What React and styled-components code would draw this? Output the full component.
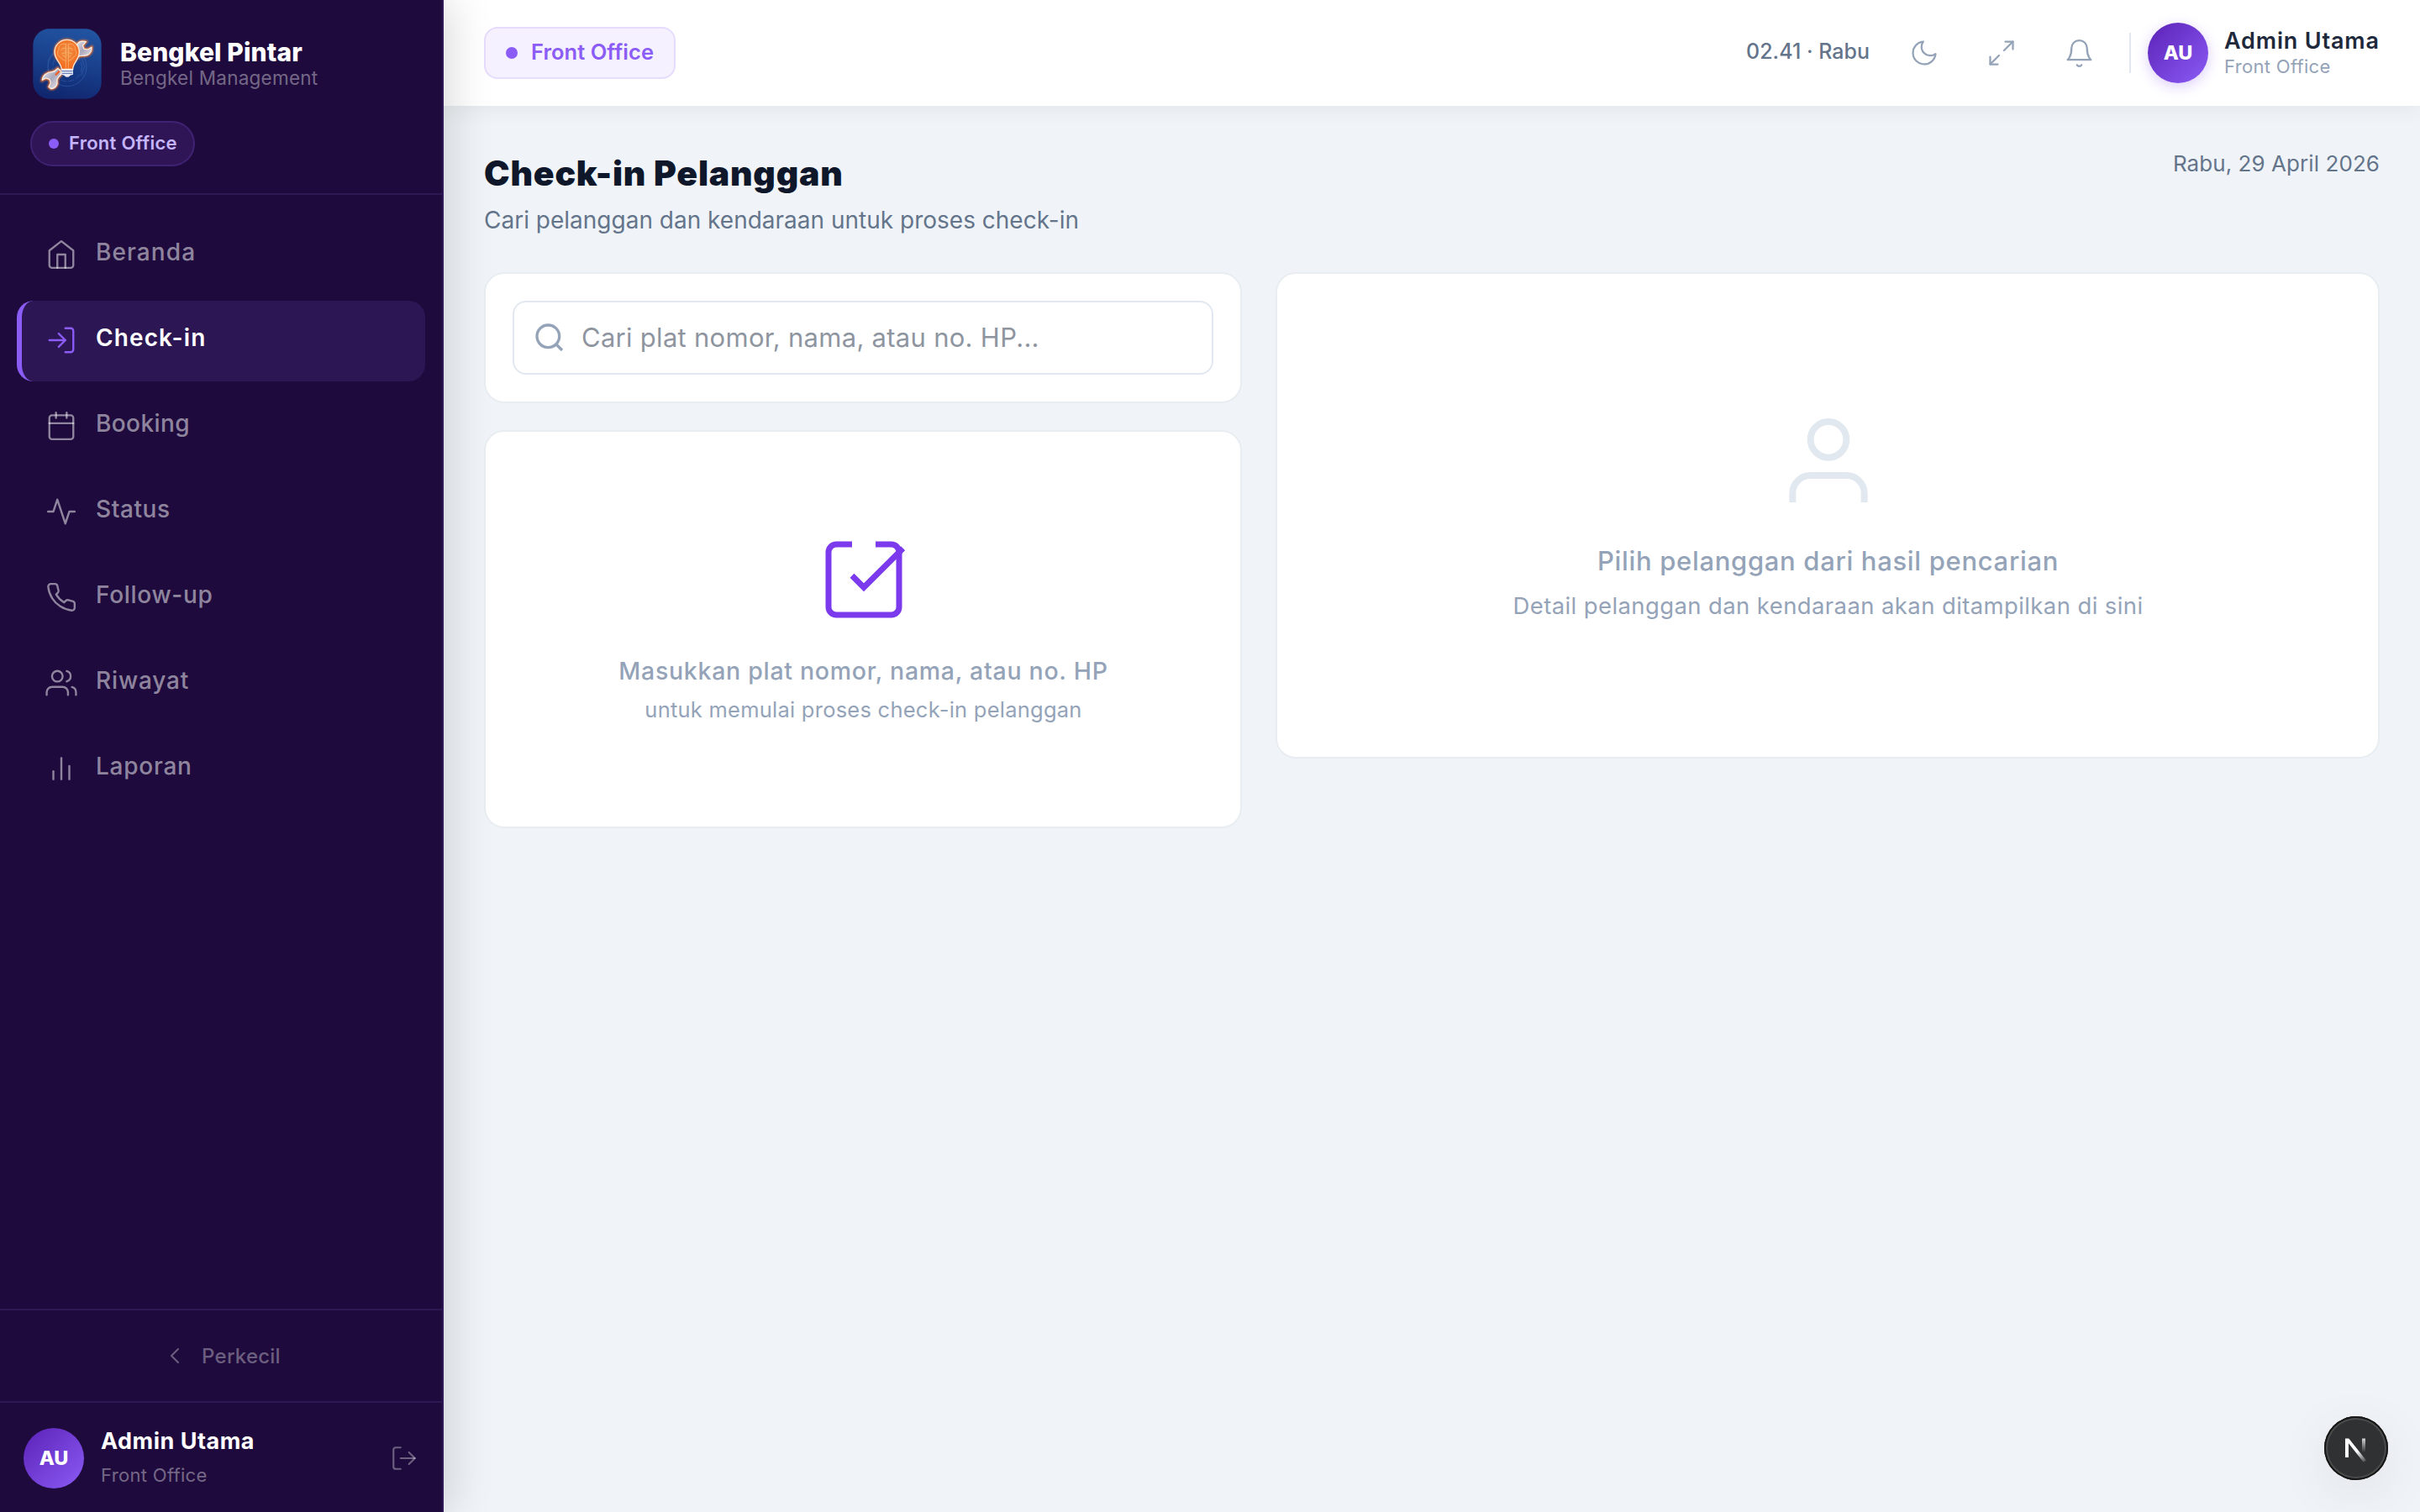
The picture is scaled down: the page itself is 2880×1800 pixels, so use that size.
import React from "react"
import styled, { createGlobalStyle } from "styled-components"

const navItems = [
  { label: "Beranda", icon: "home", tracking: 1.1 },
  { label: "Check-in", icon: "login", tracking: 1.1, active: true },
  { label: "Booking", icon: "calendar", tracking: 0.4 },
  { label: "Status", icon: "activity", tracking: 0.6 },
  { label: "Follow-up", icon: "phone", tracking: 0.7 },
  { label: "Riwayat", icon: "users", tracking: 0.85 },
  { label: "Laporan", icon: "chart", tracking: 0.75 },
]

const icons = {
  home: (
    <>
      <path d="M3 9l9-7 9 7v11a2 2 0 0 1-2 2H5a2 2 0 0 1-2-2z" />
      <polyline points="9 22 9 12 15 12 15 22" />
    </>
  ),
  login: (
    <>
      <path d="M15 3h4a2 2 0 0 1 2 2v14a2 2 0 0 1-2 2h-4" />
      <polyline points="10 17 15 12 10 7" />
      <line x1="15" y1="12" x2="3" y2="12" />
    </>
  ),
  calendar: (
    <>
      <rect x="3" y="4" width="18" height="18" rx="2" />
      <line x1="16" y1="2" x2="16" y2="6" />
      <line x1="8" y1="2" x2="8" y2="6" />
      <line x1="3" y1="10" x2="21" y2="10" />
    </>
  ),
  activity: <polyline points="22 12 18 12 15 21 9 3 6 12 2 12" />,
  phone: (
    <path d="M22 16.92v3a2 2 0 0 1-2.18 2 19.79 19.79 0 0 1-8.63-3.07 19.5 19.5 0 0 1-6-6 19.79 19.79 0 0 1-3.07-8.67A2 2 0 0 1 4.11 2h3a2 2 0 0 1 2 1.72 12.84 12.84 0 0 0 .7 2.81 2 2 0 0 1-.45 2.11L8.09 9.91a16 16 0 0 0 6 6l1.27-1.27a2 2 0 0 1 2.11-.45 12.84 12.84 0 0 0 2.81.7A2 2 0 0 1 22 16.92z" />
  ),
  users: (
    <>
      <path d="M17 21v-2a4 4 0 0 0-4-4H5a4 4 0 0 0-4 4v2" />
      <circle cx="9" cy="7" r="4" />
      <path d="M23 21v-2a4 4 0 0 0-3-3.87" />
      <path d="M16 3.13a4 4 0 0 1 0 7.75" />
    </>
  ),
  chart: (
    <>
      <line x1="18" y1="20" x2="18" y2="10" />
      <line x1="12" y1="20" x2="12" y2="4" />
      <line x1="6" y1="20" x2="6" y2="14" />
    </>
  ),
  chevron: <polyline points="15 18 9 12 15 6" />,
  logout: (
    <>
      <path d="M9 21H5a2 2 0 0 1-2-2V5a2 2 0 0 1 2-2h4" />
      <polyline points="16 17 21 12 16 7" />
      <line x1="21" y1="12" x2="9" y2="12" />
    </>
  ),
  moon: <path d="M21 12.79A9 9 0 1 1 11.21 3 7 7 0 0 0 21 12.79z" />,
  expand: (
    <>
      <polyline points="15 3 21 3 21 9" />
      <polyline points="9 21 3 21 3 15" />
      <line x1="21" y1="3" x2="14" y2="10" />
      <line x1="3" y1="21" x2="10" y2="14" />
    </>
  ),
  bell: (
    <>
      <path d="M18 8A6 6 0 0 0 6 8c0 7-3 9-3 9h18s-3-2-3-9" />
      <path d="M13.73 21a2 2 0 0 1-3.46 0" />
    </>
  ),
  search: (
    <>
      <circle cx="11" cy="11" r="8" />
      <line x1="21" y1="21" x2="16.65" y2="16.65" />
    </>
  ),
  checkin: (
    <>
      <path d="M9 3H5a2 2 0 0 0-2 2v14a2 2 0 0 0 2 2h14a2 2 0 0 0 2-2V5a2 2 0 0 0-2-2h-4" />
      <polyline points="9 11 12 14 22 4" />
    </>
  ),
  person: (
    <>
      <path d="M20 21v-2a4 4 0 0 0-4-4H8a4 4 0 0 0-4 4v2" />
      <circle cx="12" cy="7" r="4" />
    </>
  ),
}

const Icon = ({ name, size, weight = 1.5, cap = "round" }) => (
  <IconSvg
    width={size}
    height={size}
    viewBox="0 0 24 24"
    strokeWidth={weight}
    strokeLinecap={cap}
    strokeLinejoin={cap === "round" ? "round" : "miter"}
  >
    {icons[name]}
  </IconSvg>
)

const wrenchTop =
  "M200 112 C212 108 214 96 222 91 C230 86 240 87 247 89 L235 103 L240 115 L254 117 L267 109 C268 122 261 133 250 137 C238 141 228 136 220 142 L206 154 Z"
const wrenchBottom =
  "M146 184 C140 190 136 197 126 197 C110 197 92 208 91 226 L104 219 L117 223 L121 236 L114 250 L122 257 C138 256 147 243 144 228 C143 219 150 214 157 207 L156 192 Z"

const Logo = () => (
  <LogoSvg viewBox="57 42 246 252">
    <defs>
      <linearGradient id="logoBg" x1="0.6" y1="0" x2="0.4" y2="1">
        <stop offset="0" stopColor="#2153a0" />
        <stop offset="0.5" stopColor="#193f8b" />
        <stop offset="1" stopColor="#10276f" />
      </linearGradient>
      <radialGradient id="bulb" cx="0.5" cy="0.4" r="0.6">
        <stop offset="0" stopColor="#ee8f45" />
        <stop offset="1" stopColor="#f4691c" />
      </radialGradient>
      <linearGradient id="steel" x1="0" y1="0" x2="1" y2="1">
        <stop offset="0" stopColor="#f1eef2" />
        <stop offset="0.5" stopColor="#a9a8bd" />
        <stop offset="1" stopColor="#f7f0ee" />
      </linearGradient>
      <filter id="glow" x="-30%" y="-30%" width="160%" height="160%">
        <feGaussianBlur stdDeviation="3.5" />
      </filter>
    </defs>
    <rect x="58" y="43" width="244" height="250" rx="58" fill="url(#logoBg)" />
    <g fill="none" stroke="#4b7fd0" strokeWidth="3" opacity="0.35">
      <circle cx="180" cy="179" r="69" />
      <circle cx="180" cy="179" r="52" strokeDasharray="20 8" />
      <path d="M128 130 L112 158 V196 M232 150 L242 176 L230 210" />
    </g>
    <g fill="none" stroke="#ff7a2c" strokeWidth="10" filter="url(#glow)">
      <path d={wrenchTop} />
      <path d={wrenchBottom} />
      <circle cx="179" cy="125" r="44" strokeWidth="6" />
    </g>
    <g fill="url(#steel)" stroke="#fff3ea" strokeWidth="3.5" strokeLinejoin="round">
      <path d={wrenchTop} />
      <path d={wrenchBottom} />
    </g>
    <path d="M138 208 L152 194" stroke="#e9632a" strokeWidth="7" />
    <path
      d="M160 187 C158 165 135 152 135 126 A44 44 0 0 1 223 126 C223 152 200 165 200 187 Z"
      fill="url(#bulb)"
      stroke="#ffe9d6"
      strokeWidth="4"
    />
    <g fill="none" stroke="#ffd08f" strokeWidth="2.2" opacity="0.75">
      <path d="M175 96 V185 M184 96 V185" />
      <path d="M175 98 C160 92 146 106 150 118 C141 128 147 142 157 145 C160 154 169 154 175 158" />
      <path d="M184 98 C198 92 212 106 208 118 C217 128 211 142 201 145 C198 154 190 154 184 158" />
      <path d="M175 112 H163 L158 120 M175 128 L160 132 M175 144 L164 138" />
      <path d="M184 112 H195 L200 120 M184 128 L198 132 M184 144 L194 138" />
    </g>
    <path d="M159 188 H201 V206 L191 209 Q180 222 169 209 L159 206 Z" fill="#e9eaf4" />
    <path d="M160 194 H200 M161 202 H199" stroke="#35569c" strokeWidth="2.5" />
  </LogoSvg>
)

const App = () => {
  return (
    <>
      <GlobalStyle />
      <Page>
        <Sidebar>
          <SidebarHead>
            <Brand>
              <Logo />
              <BrandText>
                <BrandName>Bengkel Pintar</BrandName>
                <BrandSub>Bengkel Management</BrandSub>
              </BrandText>
            </Brand>
            <RoleBadge>
              <Dot $size={12} />
              <span>Front Office</span>
            </RoleBadge>
          </SidebarHead>
          <Nav>
            {navItems.map(({ label, icon, tracking, active }) => (
              <NavItem key={label} $active={active}>
                <Icon name={icon} size={38} />
                <NavLabel $tracking={tracking}>{label}</NavLabel>
              </NavItem>
            ))}
          </Nav>
          <Collapse>
            <Icon name="chevron" size={32} />
            <span>Perkecil</span>
          </Collapse>
          <SidebarUser>
            <Avatar>AU</Avatar>
            <SidebarUserText>
              <SidebarUserName>Admin Utama</SidebarUserName>
              <SidebarUserRole>Front Office</SidebarUserRole>
            </SidebarUserText>
            <LogoutButton>
              <Icon name="logout" size={34} />
            </LogoutButton>
          </SidebarUser>
        </Sidebar>
        <Main>
          <Topbar>
            <OfficeBadge>
              <Dot $size={14} />
              <span>Front Office</span>
            </OfficeBadge>
            <TopbarRight>
              <Clock>02.41 · Rabu</Clock>
              <IconButtons>
                <IconButton>
                  <Icon name="moon" size={36} />
                </IconButton>
                <IconButton>
                  <Icon name="expand" size={36} />
                </IconButton>
                <IconButton>
                  <Icon name="bell" size={37} />
                </IconButton>
              </IconButtons>
              <Divider />
              <Avatar $glow>AU</Avatar>
              <UserText>
                <UserName>Admin Utama</UserName>
                <UserRole>Front Office</UserRole>
              </UserText>
            </TopbarRight>
          </Topbar>
          <Content>
            <PageHead>
              <div>
                <Title>Check-in Pelanggan</Title>
                <Subtitle>Cari pelanggan dan kendaraan untuk proses check-in</Subtitle>
              </div>
              <Today>Rabu, 29 April 2026</Today>
            </PageHead>
            <Columns>
              <LeftColumn>
                <SearchCard>
                  <SearchBox>
                    <Icon name="search" size={40} weight={2} cap="butt" />
                    <SearchInput placeholder="Cari plat nomor, nama, atau no. HP..." />
                  </SearchBox>
                </SearchCard>
                <PromptCard>
                  <Icon name="checkin" size={112} cap="butt" />
                  <PromptTitle>Masukkan plat nomor, nama, atau no. HP</PromptTitle>
                  <PromptText>untuk memulai proses check-in pelanggan</PromptText>
                </PromptCard>
              </LeftColumn>
              <DetailCard>
                <Icon name="person" size={128} cap="butt" />
                <DetailTitle>Pilih pelanggan dari hasil pencarian</DetailTitle>
                <DetailText>Detail pelanggan dan kendaraan akan ditampilkan di sini</DetailText>
              </DetailCard>
            </Columns>
          </Content>
        </Main>
        <DevBadge>
          <svg width="76" height="76" viewBox="0 0 76 76" fill="none">
            <defs>
              <linearGradient id="nStem" x1="0" y1="22" x2="0" y2="43" gradientUnits="userSpaceOnUse">
                <stop stopColor="#fff" />
                <stop offset="1" stopColor="#fff" stopOpacity="0" />
              </linearGradient>
              <linearGradient id="nSlash" x1="39" y1="42" x2="50" y2="56" gradientUnits="userSpaceOnUse">
                <stop stopColor="#fff" />
                <stop offset="1" stopColor="#fff" stopOpacity="0" />
              </linearGradient>
            </defs>
            <rect x="45" y="26.5" width="4" height="16" fill="url(#nStem)" />
            <path d="M25 49V26.500h4.300L50 52.500 46.800 54.800 29 32.300V49z" fill="url(#nSlash)" />
          </svg>
        </DevBadge>
      </Page>
    </>
  )
}

export default App

const GlobalStyle = createGlobalStyle`
  * {
    box-sizing: border-box;
  }

  body {
    margin: 0;
    background: #f0f4f8;
    font-family: Inter, "Open Sans", sans-serif;
    -webkit-font-smoothing: antialiased;
  }
`

const Page = styled.div`
  display: flex;
  width: 2880px;
  height: 1800px;
  overflow: hidden;
  background: #f0f4f8;
`

const IconSvg = styled.svg`
  display: block;
  flex-shrink: 0;
  fill: none;
  stroke: currentColor;
`

const Sidebar = styled.aside`
  position: relative;
  z-index: 2;
  display: flex;
  flex-direction: column;
  width: 528px;
  height: 100%;
  flex-shrink: 0;
  background: #1e0a3c;
  border-right: 2px solid #2f1857;
  box-shadow: 8px 0 48px rgba(0, 0, 0, 0.15);
`

const SidebarHead = styled.div`
  height: 232px;
  padding: 34px 36px 0;
  border-bottom: 2px solid #2e1853;
`

const Brand = styled.div`
  display: flex;
  gap: 22px;
  height: 84px;
  padding-left: 3px;
`

const LogoSvg = styled.svg`
  display: block;
  width: 82px;
  height: 84px;
  flex-shrink: 0;
`

const BrandText = styled.div`
  padding-top: 12px;
  white-space: nowrap;
`

const BrandName = styled.div`
  font-size: 30px;
  font-weight: 800;
  line-height: 32px;
  letter-spacing: 0.12px;
  color: #fff;
`

const BrandSub = styled.div`
  font-size: 22.5px;
  line-height: 30px;
  letter-spacing: 0.25px;
  color: rgba(255, 255, 255, 0.4);
`

const RoleBadge = styled.div`
  display: inline-flex;
  align-items: center;
  gap: 12px;
  width: 196px;
  height: 54px;
  margin-top: 26px;
  padding-left: 20px;
  border: 2px solid #3f2273;
  border-radius: 27px;
  background: #2f1556;
  font-size: 22px;
  font-weight: 600;
  letter-spacing: 0.26px;
  white-space: nowrap;
  color: #c4b5fd;

  span:last-child {
    padding-bottom: 2px;
  }
`

const Dot = styled.span`
  width: ${({ $size }) => $size}px;
  height: ${({ $size }) => $size}px;
  flex-shrink: 0;
  border-radius: 50%;
  background: #8b5cf6;
`

const Nav = styled.nav`
  display: flex;
  flex: 1;
  flex-direction: column;
  gap: 6px;
  padding: 24px 20px;
`

const NavItem = styled.a`
  display: flex;
  align-items: center;
  gap: 22px;
  height: 96px;
  padding-left: 28px;
  border-left: 6px solid ${({ $active }) => ($active ? "#8b5cf6" : "transparent")};
  border-radius: 20px;
  background: ${({ $active }) => ($active ? "#2c1654" : "transparent")};
  font-weight: ${({ $active }) => ($active ? 600 : 500)};
  color: ${({ $active }) => ($active ? "#fff" : "rgba(255, 255, 255, 0.52)")};

  svg {
    margin-bottom: 2px;
    color: ${({ $active }) => ($active ? "#8b5cf6" : "rgba(255, 255, 255, 0.5)")};
  }
`

const NavLabel = styled.span`
  padding-bottom: 8px;
  font-size: 28px;
  letter-spacing: ${({ $tracking }) => $tracking}px;
`

const Collapse = styled.div`
  display: flex;
  align-items: center;
  justify-content: center;
  gap: 16px;
  height: 110px;
  border-top: 2px solid #2e1853;
  font-size: 24px;
  font-weight: 500;
  letter-spacing: 0.23px;
  color: rgba(255, 255, 255, 0.35);
`

const SidebarUser = styled.div`
  display: flex;
  align-items: center;
  gap: 20px;
  height: 132px;
  padding: 2px 28px 0;
  border-top: 2px solid #2e1853;
`

const Avatar = styled.div`
  display: flex;
  align-items: center;
  justify-content: center;
  width: 72px;
  height: 72px;
  flex-shrink: 0;
  border-radius: 50%;
  background: linear-gradient(135deg, #5b21b6, #8b5cf6);
  box-shadow: ${({ $glow }) => ($glow ? "0 4px 16px rgba(139, 92, 246, 0.3)" : "none")};
  font-size: 23.5px;
  font-weight: 800;
  line-height: 72px;
  color: #fff;
`

const SidebarUserText = styled.div`
  flex: 1;
  white-space: nowrap;
`

const SidebarUserName = styled.div`
  margin-bottom: 8px;
  font-size: 27px;
  font-weight: 700;
  line-height: 32px;
  letter-spacing: 0.5px;
  color: #fff;
`

const SidebarUserRole = styled.div`
  font-size: 22px;
  line-height: 32px;
  letter-spacing: 0.32px;
  color: rgba(255, 255, 255, 0.4);
`

const LogoutButton = styled.div`
  color: rgba(255, 255, 255, 0.35);
`

const Main = styled.main`
  display: flex;
  flex: 1;
  flex-direction: column;
`

const Topbar = styled.header`
  display: flex;
  align-items: center;
  justify-content: space-between;
  height: 126px;
  padding: 0 48px;
  background: #fff;
  box-shadow: 0 4px 24px rgba(0, 0, 0, 0.06);
`

const OfficeBadge = styled.div`
  display: flex;
  align-items: center;
  gap: 16px;
  width: 228px;
  height: 62px;
  padding-left: 24px;
  border: 2px solid #e6dcfd;
  border-radius: 16px;
  background: #f5f1fe;
  font-size: 25.5px;
  font-weight: 600;
  letter-spacing: 0.03px;
  white-space: nowrap;
  color: #8b5cf6;

  span:last-child {
    padding-bottom: 4px;
  }
`

const TopbarRight = styled.div`
  display: flex;
  align-items: center;
`

const Clock = styled.div`
  margin-right: 27px;
  padding-bottom: 5px;
  font-size: 25px;
  font-weight: 500;
  color: #64748b;
`

const IconButtons = styled.div`
  display: flex;
  gap: 16px;
`

const IconButton = styled.div`
  display: flex;
  align-items: center;
  justify-content: center;
  width: 76px;
  height: 76px;
  color: #94a3b8;
`

const Divider = styled.div`
  width: 2px;
  height: 48px;
  margin: 0 20px 0 22px;
  background: #e2e8f0;
`

const UserText = styled.div`
  width: 185px;
  margin-left: 19px;
  white-space: nowrap;
`

const UserName = styled.div`
  margin-top: 1px;
  font-size: 27px;
  font-weight: 600;
  line-height: 32px;
  letter-spacing: 0.83px;
  color: #1e293b;
`

const UserRole = styled.div`
  padding-bottom: 1px;
  font-size: 22px;
  line-height: 28px;
  letter-spacing: 0.32px;
  color: #94a3b8;
`

const Content = styled.div`
  padding: 48px 48px 0;
`

const PageHead = styled.div`
  display: flex;
  justify-content: space-between;
  height: 110px;
  margin-bottom: 40px;
`

const Title = styled.h1`
  margin: 2px 0 5px;
  font-size: 41px;
  font-weight: 900;
  line-height: 60px;
  letter-spacing: 0.75px;
  color: #0f172a;
`

const Subtitle = styled.p`
  margin: 0;
  font-size: 28px;
  line-height: 42px;
  color: #64748b;
`

const Today = styled.div`
  font-size: 26px;
  line-height: 42px;
  letter-spacing: 0.07px;
  color: #64748b;
`

const Columns = styled.div`
  display: grid;
  grid-template-columns: 902px 1fr;
  align-items: start;
  gap: 40px;
`

const LeftColumn = styled.div`
  display: flex;
  flex-direction: column;
  gap: 32px;
`

const Card = styled.section`
  border: 2px solid #e8edf2;
  border-radius: 24px;
  background: #fff;
`

const SearchCard = styled(Card)`
  height: 156px;
  padding: 32px;
`

const SearchBox = styled.label`
  display: flex;
  align-items: center;
  gap: 18px;
  height: 88px;
  padding: 0 22px;
  border: 2px solid #e2e8f0;
  border-radius: 16px;
  color: #94a3b8;
`

const SearchInput = styled.input`
  flex: 1;
  min-width: 0;
  padding: 0 0 2px;
  border: 0;
  outline: none;
  background: transparent;
  font-family: inherit;
  font-size: 31px;
  letter-spacing: 0.28px;

  &::placeholder {
    color: #8e959f;
  }
`

const EmptyCard = styled(Card)`
  display: flex;
  flex-direction: column;
  align-items: center;
  text-align: center;
  color: #94a3b8;
`

const PromptCard = styled(EmptyCard)`
  height: 474px;
  padding: 120px 0 0 1px;

  svg {
    color: #7c3aed;
  }
`

const PromptTitle = styled.div`
  margin: 32px 0 7px;
  font-size: 28.5px;
  font-weight: 500;
  line-height: 42px;
  letter-spacing: 0.71px;
`

const PromptText = styled.div`
  font-size: 25.5px;
  line-height: 36px;
  letter-spacing: 0.24px;
`

const DetailCard = styled(EmptyCard)`
  height: 579px;
  padding: 160px 0 0 1px;

  svg {
    color: #e2e8f0;
  }
`

const DetailTitle = styled.div`
  margin: 31px 0 9px;
  font-size: 31px;
  font-weight: 500;
  line-height: 46px;
  letter-spacing: 0.67px;
`

const DetailText = styled.div`
  font-size: 27.5px;
  line-height: 42px;
  letter-spacing: 0.39px;
`

// floats over the page, bottom right
const DevBadge = styled.div`
  position: absolute;
  top: 1686px;
  left: 2766px;
  z-index: 3;
  width: 76px;
  height: 76px;
  border-radius: 50%;
  background: #2f3133;
  box-shadow:
    inset 0 0 0 2px #171717,
    inset 0 0 0 4px #4b4b4b,
    0 16px 64px rgba(0, 0, 0, 0.08);
`
